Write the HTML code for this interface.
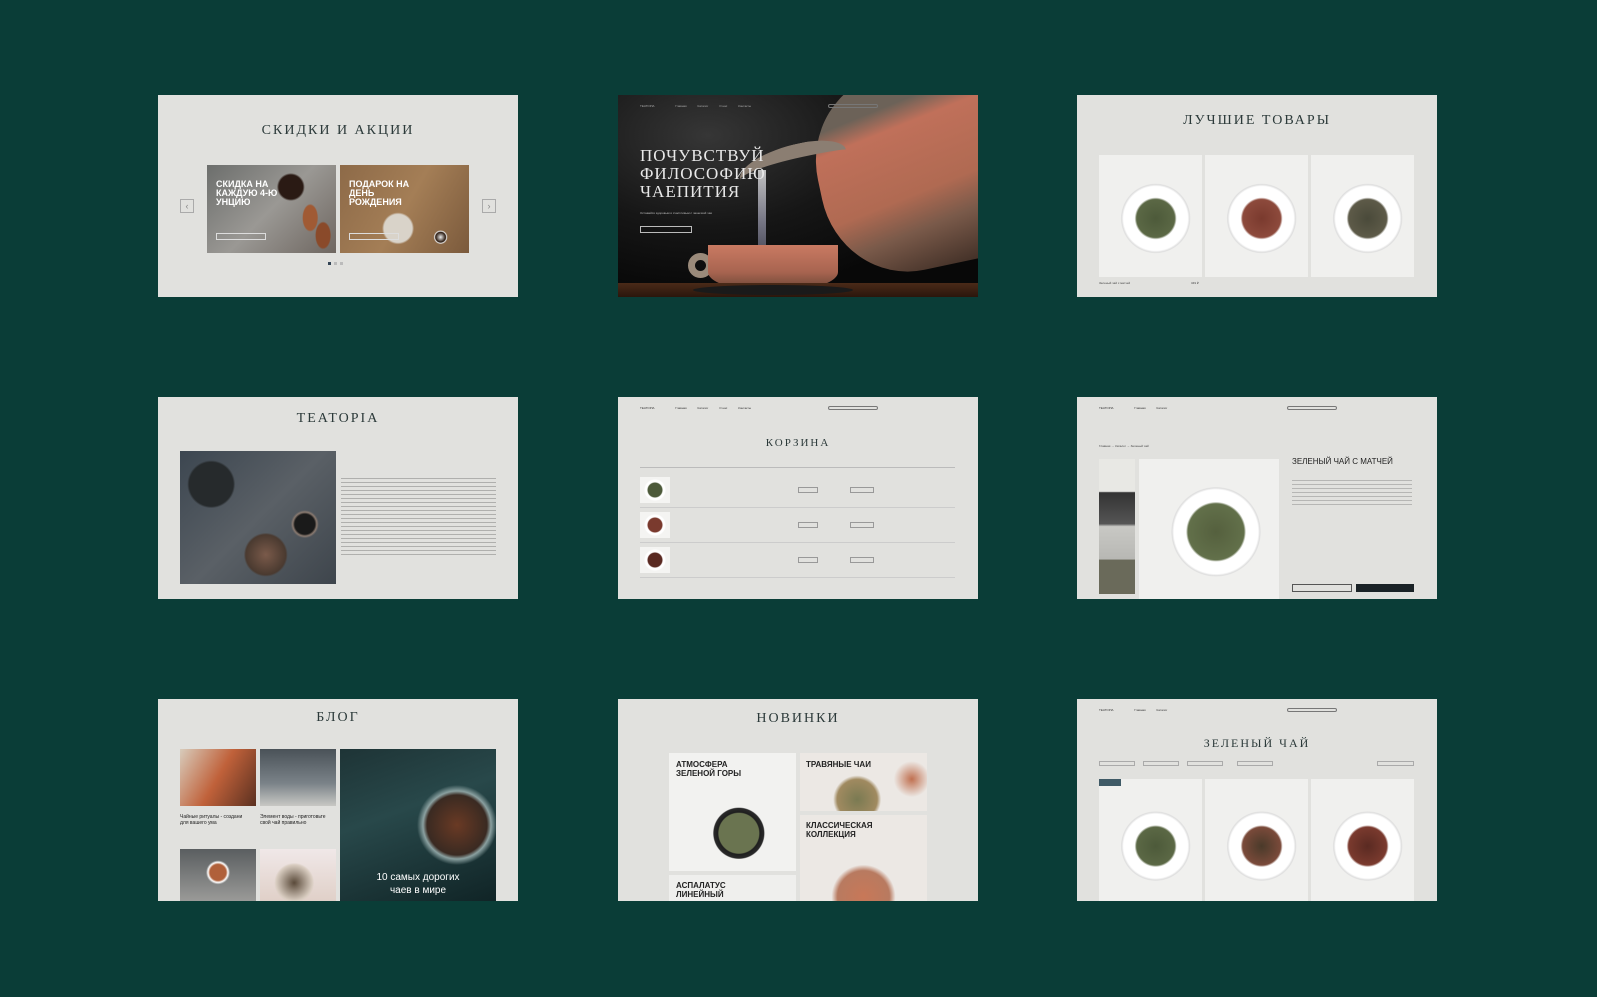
<!DOCTYPE html>
<html><head><meta charset="utf-8">
<style>
*{margin:0;padding:0;box-sizing:border-box}
body{width:1597px;height:997px;background:#0a3d37;position:relative;overflow:hidden;font-family:"Liberation Sans",sans-serif}
.c{position:absolute;width:360px;height:202px;background:#e1e1de;overflow:hidden}
.t{position:absolute;left:0;right:0;text-align:center;font-family:"Liberation Serif",serif;color:#2c3a3a;font-size:14px;letter-spacing:2px}
.a{position:absolute}
.nav{position:absolute;left:22px;right:22px;top:9px;height:6px;font-size:3px;color:#333}
.s{font-size:3px;color:#444}
</style></head><body>

<!-- 1 Skidki -->
<div class="c" style="left:158px;top:95px">
 <div class="t" style="top:28px">СКИДКИ И АКЦИИ</div>
 <div class="a" style="left:49px;top:70px;width:129px;height:88px;background:radial-gradient(circle 14px at 65% 25%,#2a1a14 0,#2a1a14 12px,transparent 14px),radial-gradient(ellipse 8px 14px at 80% 60%,#a05a34 0,#a05a34 7px,transparent 8px),radial-gradient(ellipse 8px 14px at 90% 80%,#8a4a2a 0,#8a4a2a 7px,transparent 8px),linear-gradient(135deg,#6c6e6c,#9a9894 50%,#6e6660)"></div>
 <div class="a" style="left:182px;top:70px;width:129px;height:88px;background:radial-gradient(circle 16px at 45% 72%,#d9d3c9 0,#d9d3c9 14px,transparent 16px),radial-gradient(circle 7px at 78% 82%,#eee 0,#2a1a10 5px,#eee 6px,transparent 7px),linear-gradient(120deg,#8d6a48,#a47e56 50%,#7b5a3c)"></div>
 <div class="a" style="left:58px;top:85px;color:#fff;font-size:9px;line-height:9px;font-weight:bold">СКИДКА НА<br>КАЖДУЮ 4-Ю<br>УНЦИЮ</div>
 <div class="a" style="left:191px;top:85px;color:#fff;font-size:9px;line-height:9px;font-weight:bold">ПОДАРОК НА<br>ДЕНЬ<br>РОЖДЕНИЯ</div>
 <div class="a" style="left:58px;top:138px;width:50px;height:7px;border:1px solid #ddd"></div>
 <div class="a" style="left:191px;top:138px;width:50px;height:7px;border:1px solid #ddd"></div>
 <div class="a" style="left:22px;top:104px;width:14px;height:14px;border:1px solid #aaa;color:#888;font-size:9px;text-align:center;line-height:12px">‹</div>
 <div class="a" style="left:324px;top:104px;width:14px;height:14px;border:1px solid #aaa;color:#888;font-size:9px;text-align:center;line-height:12px">›</div>
 <div class="a" style="left:170px;top:167px;width:3px;height:3px;background:#345"></div>
 <div class="a" style="left:176px;top:167px;width:3px;height:3px;background:#bbb"></div>
 <div class="a" style="left:182px;top:167px;width:3px;height:3px;background:#bbb"></div>
</div>

<!-- 2 hero -->
<div class="c" style="left:618px;top:95px;background:radial-gradient(ellipse at 25% 20%,#363636 0,#161616 40%,#080808 70%)">
 <div class="a" style="left:200px;top:-25px;width:190px;height:200px;border-radius:45% 0 0 45%;transform:rotate(-12deg);background:linear-gradient(170deg,#6c6258 0,#6c6258 20%,#c0705a 30%,#b06a52 60%,#7a5a4a 75%,#3a2a22)"></div>
 <div class="a" style="left:120px;top:50px;width:110px;height:40px;border-radius:60% 40% 0 0;border-top:14px solid #8b7e72;transform:rotate(-12deg)"></div>
 <div class="a" style="left:140px;top:75px;width:8px;height:85px;background:linear-gradient(#ddd,#889 60%,#556);opacity:.85"></div>
 <div class="a" style="left:70px;top:158px;width:25px;height:25px;border:7px solid #9a8a7a;border-radius:50%"></div>
 <div class="a" style="left:90px;top:150px;width:130px;height:45px;border-radius:0 0 40% 40%;background:linear-gradient(#c97a62,#a86450 60%,#6a4636)"></div>
 <div class="a" style="left:0;top:188px;width:360px;height:14px;background:linear-gradient(#4a2a18,#2a160c)"></div>
 <div class="a" style="left:75px;top:190px;width:160px;height:10px;border-radius:50%;background:#1a1a1a"></div>
 <div class="nav" style="color:#aaa">TEATOPIA <span style="margin-left:20px">Главная</span> <span style="margin-left:10px">Каталог</span> <span style="margin-left:10px">О нас</span> <span style="margin-left:10px">Контакты</span></div>
 <div class="a" style="left:210px;top:9px;width:50px;height:4px;border:1px solid #777;border-radius:3px"></div>
 <div class="a" style="left:22px;top:52px;color:#e8e8e8;font-family:'Liberation Serif',serif;font-size:17px;line-height:18px;letter-spacing:1px">ПОЧУВСТВУЙ<br>ФИЛОСОФИЮ<br>ЧАЕПИТИЯ</div>
 <div class="a s" style="left:22px;top:116px;color:#bbb">Оставайся здоровым и счастливым с чашечкой чая</div>
 <div class="a" style="left:22px;top:131px;width:52px;height:7px;border:1px solid #bbb"></div>
</div>

<!-- 3 best -->
<div class="c" style="left:1077px;top:95px">
 <div class="t" style="top:18px">ЛУЧШИЕ ТОВАРЫ</div>
 <div class="a" style="left:22px;top:60px;width:103px;height:122px;background:radial-gradient(circle 34px at 55% 52%,#4d5a3a 0,#5b6845 19px,#fff 21px,#fff 32px,#ddd 34px,transparent 35px),#f0f0ee"></div>
 <div class="a" style="left:128px;top:60px;width:103px;height:122px;background:radial-gradient(circle 34px at 55% 52%,#7a3a2e 0,#8d4a3c 19px,#fff 21px,#fff 32px,#ddd 34px,transparent 35px),#f0f0ee"></div>
 <div class="a" style="left:234px;top:60px;width:103px;height:122px;background:radial-gradient(circle 34px at 55% 52%,#4a4a3a 0,#5d5a48 19px,#fff 21px,#fff 32px,#ddd 34px,transparent 35px),#f0f0ee"></div>
 <div class="a s" style="left:22px;top:186px;width:315px;font-size:3px">Зеленый чай с матчей <span style="margin-left:60px">349 ₽</span></div>
</div>

<!-- 4 teatopia -->
<div class="c" style="left:158px;top:397px">
 <div class="t" style="top:14px">TEATOPIA</div>
 <div class="a" style="left:22px;top:54px;width:156px;height:133px;background:radial-gradient(circle 22px at 55% 78%,#7a5a4a 0,#4a3a30 20px,transparent 22px),radial-gradient(circle 14px at 80% 55%,#1a1a1a 0,#1a1a1a 10px,#8a7a70 12px,transparent 14px),radial-gradient(circle 24px at 20% 25%,#262a2c 0,#262a2c 22px,transparent 24px),linear-gradient(135deg,#3c4650,#5a6066 50%,#3e454c)"></div>
 <div class="a" style="left:183px;top:78px;width:155px;height:80px;background:repeating-linear-gradient(#e1e1de 0,#e1e1de 3px,#9a9a98 3px,#9a9a98 4px);opacity:.7"></div>
</div>

<!-- 5 cart -->
<div class="c" style="left:618px;top:397px">
 <div class="nav">TEATOPIA <span style="margin-left:20px">Главная</span> <span style="margin-left:10px">Каталог</span> <span style="margin-left:10px">О нас</span> <span style="margin-left:10px">Контакты</span></div>
 <div class="a" style="left:210px;top:9px;width:50px;height:4px;border:1px solid #777;border-radius:3px"></div>
 <div class="t" style="top:40px;font-size:11px">КОРЗИНА</div>
 <div class="a" style="left:22px;top:70px;width:315px;border-top:1px solid #bbb"></div>
 <div class="a" style="left:22px;top:80px;width:30px;height:26px;background:radial-gradient(circle 11px,#4d5a3a 0,#4d5a3a 7px,#fff 8px,#fff 10px,transparent 11px),#f4f4f2"></div>
 <div class="a" style="left:22px;top:115px;width:30px;height:26px;background:radial-gradient(circle 11px,#7a3a2e 0,#7a3a2e 7px,#fff 8px,#fff 10px,transparent 11px),#f4f4f2"></div>
 <div class="a" style="left:22px;top:150px;width:30px;height:26px;background:radial-gradient(circle 11px,#5a2a22 0,#5a2a22 7px,#fff 8px,#fff 10px,transparent 11px),#f4f4f2"></div>
 <div class="a" style="left:180px;top:90px;width:20px;height:6px;border:1px solid #999"></div>
 <div class="a" style="left:232px;top:90px;width:24px;height:6px;border:1px solid #999"></div>
 <div class="a" style="left:180px;top:125px;width:20px;height:6px;border:1px solid #999"></div>
 <div class="a" style="left:232px;top:125px;width:24px;height:6px;border:1px solid #999"></div>
 <div class="a" style="left:180px;top:160px;width:20px;height:6px;border:1px solid #999"></div>
 <div class="a" style="left:232px;top:160px;width:24px;height:6px;border:1px solid #999"></div>
 <div class="a" style="left:22px;top:110px;width:315px;border-top:1px solid #ccc"></div>
 <div class="a" style="left:22px;top:145px;width:315px;border-top:1px solid #ccc"></div>
 <div class="a" style="left:22px;top:180px;width:315px;border-top:1px solid #ccc"></div>
</div>

<!-- 6 product -->
<div class="c" style="left:1077px;top:397px">
 <div class="nav">TEATOPIA <span style="margin-left:20px">Главная</span> <span style="margin-left:10px">Каталог</span></div>
 <div class="a" style="left:210px;top:9px;width:50px;height:4px;border:1px solid #777;border-radius:3px"></div>
 <div class="a s" style="left:22px;top:47px">Главная → Каталог → Зеленый чай</div>
 <div class="a" style="left:22px;top:62px;width:36px;height:135px;background:linear-gradient(#e8e8e4 0,#e8e8e4 24%,#333 25%,#555 48%,#c8c8c4 50%,#b8b8b4 74%,#6a6a5a 75%)"></div>
 <div class="a" style="left:62px;top:62px;width:140px;height:140px;background:radial-gradient(circle 45px at 55% 52%,#55603e 0,#62704a 28px,#fff 30px,#fff 42px,#ddd 44px,transparent 45px),#f0f0ee"></div>
 <div class="a" style="left:215px;top:60px;font-size:8px;color:#222">ЗЕЛЕНЫЙ ЧАЙ С МАТЧЕЙ</div>
 <div class="a" style="left:215px;top:80px;width:120px;height:30px;background:repeating-linear-gradient(#e1e1de 0,#e1e1de 3px,#999 3px,#999 4px);opacity:.6"></div>
 <div class="a" style="left:215px;top:187px;width:60px;height:8px;border:1px solid #555"></div>
 <div class="a" style="left:279px;top:187px;width:58px;height:8px;background:#1a2226"></div>
</div>

<!-- 7 blog -->
<div class="c" style="left:158px;top:699px">
 <div class="t" style="top:11px">БЛОГ</div>
 <div class="a" style="left:22px;top:50px;width:76px;height:57px;background:linear-gradient(120deg,#d8ccbc,#c0613a 50%,#5a3020)"></div>
 <div class="a" style="left:102px;top:50px;width:76px;height:57px;background:linear-gradient(#4a5258,#7a8288 60%,#c8c8c4)"></div>
 <div class="a" style="left:182px;top:50px;width:156px;height:152px;background:radial-gradient(circle 40px at 75% 50%,#6a3a24 0,#3a2a22 30px,#8aa0a0 34px,transparent 40px),linear-gradient(160deg,#1e3436,#28484a 40%,#102426)"></div>
 <div class="a" style="left:22px;top:115px;font-size:5px;line-height:6px;color:#222">Чайные ритуалы - создани<br>для вашего ума</div>
 <div class="a" style="left:102px;top:115px;font-size:5px;line-height:6px;color:#222">Элемент воды - приготовьте<br>свой чай правильно</div>
 <div class="a" style="left:22px;top:150px;width:76px;height:52px;background:radial-gradient(circle 12px at 50% 45%,#b0603a 0,#b0603a 8px,#fff 10px,transparent 12px),linear-gradient(#5a5e60,#9a9a98)"></div>
 <div class="a" style="left:102px;top:150px;width:76px;height:52px;background:radial-gradient(circle 20px at 45% 65%,#5a4a3a 0,#d8ccc0 18px,transparent 20px),linear-gradient(#f0e8e8,#e0d0c8)"></div>
 <div class="a" style="left:182px;top:172px;width:156px;text-align:center;color:#fff;font-size:10px;line-height:13px">10 самых дорогих<br>чаев в мире</div>
</div>

<!-- 8 novinki -->
<div class="c" style="left:618px;top:699px">
 <div class="t" style="top:12px">НОВИНКИ</div>
 <div class="a" style="left:51px;top:54px;width:127px;height:118px;background:radial-gradient(circle 26px at 55% 68%,#6a7450 0,#6a7450 20px,#1e1e1e 21px,#2a2a2a 25px,transparent 26px),#f2f2f0"></div>
 <div class="a" style="left:182px;top:54px;width:127px;height:58px;background:radial-gradient(circle 24px at 45% 80%,#7a7a52 0,#a08a60 20px,transparent 24px),radial-gradient(circle 18px at 88% 45%,#c07050 0,transparent 18px),#ece8e4"></div>
 <div class="a" style="left:182px;top:116px;width:127px;height:86px;background:radial-gradient(circle 32px at 50% 95%,#c87858 0,#b87a60 26px,transparent 32px),#ece8e4"></div>
 <div class="a" style="left:51px;top:176px;width:127px;height:26px;background:#efefed"></div>
 <div class="a" style="left:58px;top:61px;font-size:8px;line-height:9px;color:#222;font-weight:bold">АТМОСФЕРА<br>ЗЕЛЕНОЙ ГОРЫ</div>
 <div class="a" style="left:188px;top:61px;font-size:8px;color:#222;font-weight:bold">ТРАВЯНЫЕ ЧАИ</div>
 <div class="a" style="left:188px;top:122px;font-size:8px;line-height:9px;color:#222;font-weight:bold">КЛАССИЧЕСКАЯ<br>КОЛЛЕКЦИЯ</div>
 <div class="a" style="left:58px;top:182px;font-size:8px;line-height:9px;color:#222;font-weight:bold">АСПАЛАТУС<br>ЛИНЕЙНЫЙ</div>
</div>

<!-- 9 green tea -->
<div class="c" style="left:1077px;top:699px">
 <div class="nav">TEATOPIA <span style="margin-left:20px">Главная</span> <span style="margin-left:10px">Каталог</span></div>
 <div class="a" style="left:210px;top:9px;width:50px;height:4px;border:1px solid #777;border-radius:3px"></div>
 <div class="t" style="top:37px;font-size:12px">ЗЕЛЕНЫЙ ЧАЙ</div>
 <div class="a" style="left:22px;top:62px;width:36px;height:5px;border:1px solid #aaa"></div>
 <div class="a" style="left:66px;top:62px;width:36px;height:5px;border:1px solid #aaa"></div>
 <div class="a" style="left:110px;top:62px;width:36px;height:5px;border:1px solid #aaa"></div>
 <div class="a" style="left:160px;top:62px;width:36px;height:5px;border:1px solid #aaa"></div>
 <div class="a" style="left:300px;top:62px;width:37px;height:5px;border:1px solid #aaa"></div>
 <div class="a" style="left:22px;top:80px;width:103px;height:122px;background:radial-gradient(circle 34px at 55% 55%,#4d5a3a 0,#5b6845 19px,#fff 21px,#fff 32px,#ddd 34px,transparent 35px),#f0f0ee"></div>
 <div class="a" style="left:22px;top:80px;width:22px;height:7px;background:#3f5a66"></div>
 <div class="a" style="left:128px;top:80px;width:103px;height:122px;background:radial-gradient(circle 34px at 55% 55%,#4a3a2a 0,#7a4a3a 19px,#fff 21px,#fff 32px,#ddd 34px,transparent 35px),#f0f0ee"></div>
 <div class="a" style="left:234px;top:80px;width:103px;height:122px;background:radial-gradient(circle 34px at 55% 55%,#5a2a22 0,#7a3a2e 19px,#fff 21px,#fff 32px,#ddd 34px,transparent 35px),#f0f0ee"></div>
</div>

</body></html>
